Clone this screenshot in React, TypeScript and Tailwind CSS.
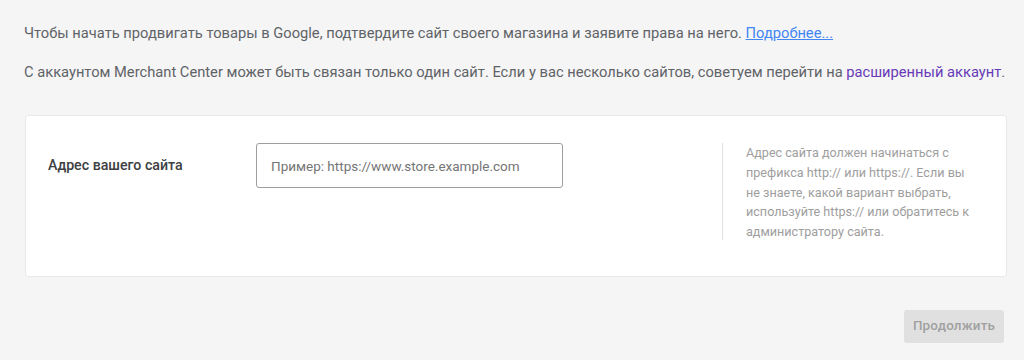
export default function App() {
  return (
    <div className="min-h-[360px] w-[1024px] bg-[#f5f5f5] font-['Roboto',sans-serif] text-[#3c4043]">
      <div className="pl-6 pr-4 pt-[23px]">
        <p className="whitespace-nowrap text-[14.7px] leading-5 text-[#5f6368]">
          Чтобы начать продвигать товары в Google, подтвердите сайт своего магазина и заявите права на него.{" "}
          <a className="text-[#4285f4] underline">Подробнее...</a>
        </p>
        <p className="mt-[19px] whitespace-nowrap text-[14.7px] leading-5 text-[#5f6368]">
          С аккаунтом Merchant Center может быть связан только один сайт. Если у вас несколько сайтов, советуем перейти на{" "}
          <a className="text-[#673ab7]">расширенный аккаунт</a>.
        </p>
      </div>

      <div className="ml-[25px] mr-[17px] mt-[33px] h-[162px] rounded-[3px] border border-[#e8e8e8] bg-white">
        <div className="flex items-start pt-[27px]">
          <div className="flex h-[45px] w-[230px] items-center pl-[22px] text-[14.2px] font-medium text-[#3c4043]">
            Адрес вашего сайта
          </div>
          <div className="w-[307px]">
            <input
              className="h-[45px] w-full rounded-[3px] border border-[#9e9e9e] px-[14px] text-[13.5px] text-[#3c4043] outline-none placeholder:text-[#757575]"
              placeholder="Пример: https://www.store.example.com"
            />
          </div>
          <div className="ml-[159px] h-[97px] border-l border-[#e0e0e0] pl-[23px]">
            <p className="whitespace-nowrap text-[12.6px] leading-[19.8px] text-[#9e9e9e]">
              Адрес сайта должен начинаться с<br />
              префикса http:// или https://. Если вы<br />
              не знаете, какой вариант выбрать,<br />
              используйте https:// или обратитесь к<br />
              администратору сайта.
            </p>
          </div>
        </div>
      </div>

      <div className="mr-[20px] mt-[33px] flex justify-end pb-[17px]">
        <button className="h-[33px] w-[100px] rounded-[3px] bg-[#e0e0e0] text-[13.4px] font-medium tracking-[0.2px] text-[#a0a0a0]">
          Продолжить
        </button>
      </div>
    </div>
  );
}
